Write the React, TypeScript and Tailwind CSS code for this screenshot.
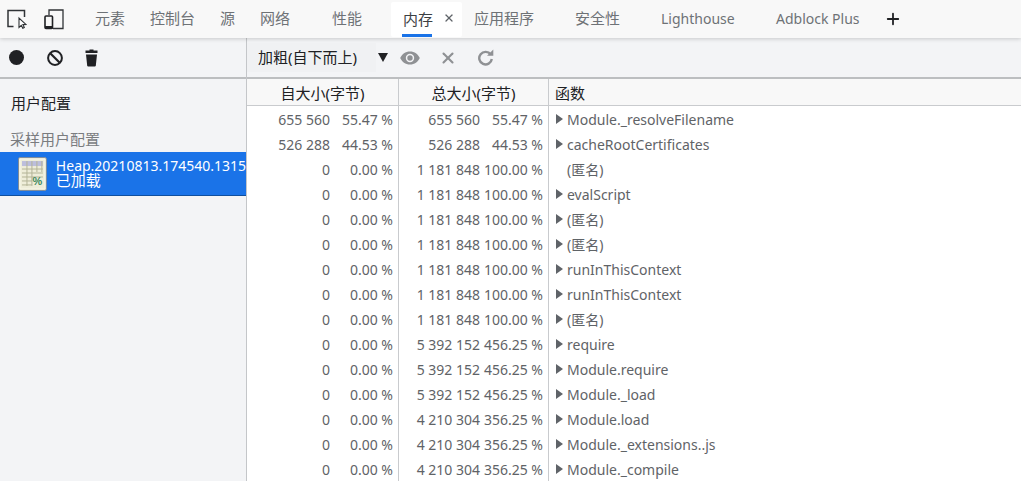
import React from 'react';
import { Plus, X } from 'lucide-react';

const font = "font-['Noto_Sans','Noto_Sans_CJK_SC',sans-serif]";

type Row = { self: string; selfPct: string; total: string; totalPct: string; name: string; arrow: boolean };

const mk = (self: string, selfPct: string, total: string, totalPct: string, name: string, arrow = true): Row => ({
  self,
  selfPct,
  total,
  totalPct,
  name,
  arrow,
});

const rows: Row[] = [
  mk('655 560', '55.47 %', '655 560', '55.47 %', 'Module._resolveFilename'),
  mk('526 288', '44.53 %', '526 288', '44.53 %', 'cacheRootCertificates'),
  mk('0', '0.00 %', '1 181 848', '100.00 %', '(匿名)', false),
  mk('0', '0.00 %', '1 181 848', '100.00 %', 'evalScript'),
  mk('0', '0.00 %', '1 181 848', '100.00 %', '(匿名)'),
  mk('0', '0.00 %', '1 181 848', '100.00 %', '(匿名)'),
  mk('0', '0.00 %', '1 181 848', '100.00 %', 'runInThisContext'),
  mk('0', '0.00 %', '1 181 848', '100.00 %', 'runInThisContext'),
  mk('0', '0.00 %', '1 181 848', '100.00 %', '(匿名)'),
  mk('0', '0.00 %', '5 392 152', '456.25 %', 'require'),
  mk('0', '0.00 %', '5 392 152', '456.25 %', 'Module.require'),
  mk('0', '0.00 %', '5 392 152', '456.25 %', 'Module._load'),
  mk('0', '0.00 %', '4 210 304', '356.25 %', 'Module.load'),
  mk('0', '0.00 %', '4 210 304', '356.25 %', 'Module._extensions..js'),
  mk('0', '0.00 %', '4 210 304', '356.25 %', 'Module._compile'),
];

const tabs = [
  { label: '元素', w: 'w-[55px]', cls: 'text-[15px]' },
  { label: '控制台', w: 'w-[70px]', cls: 'text-[15px]' },
  { label: '源', w: 'w-[40px]', cls: 'text-[15px]' },
  { label: '网络', w: 'w-[72px]', cls: 'text-[15px]' },
  { label: '性能', w: 'w-[59px]', cls: 'text-[15px]' },
];

const tabsAfter = [
  { label: '应用程序', w: 'w-[101px]', cls: 'text-[15px]' },
  { label: '安全性', w: 'w-[86px]', cls: 'text-[15px]' },
  { label: 'Lighthouse', w: 'w-[115px]', cls: 'text-[14px]' },
  { label: 'Adblock Plus', w: 'w-[109px]', cls: 'text-[14px]' },
];

const InspectIcon = () => (
  <svg width="20" height="20" viewBox="0 0 20 20" fill="none">
    <path d="M6.500 17.500H1V1.500h16.500V8" stroke="#303336" strokeWidth="1.500" />
    <path d="M12 9l0 9.500 2.300-2.200 1.500 3 1.500-.8-1.400-2.900 3-.2z" fill="#fff" stroke="#303336" strokeWidth="1.100" />
  </svg>
);

const DeviceIcon = () => (
  <svg width="20" height="21" viewBox="0 0 20 21" fill="none">
    <path d="M5 6V1h14v18.500H9" stroke="#303336" strokeWidth="1.300" />
    <rect x="1" y="7" width="7.500" height="12.500" rx="1" stroke="#202124" strokeWidth="1.600" />
    <rect x="1" y="17" width="7.500" height="3" fill="#202124" />
  </svg>
);

const ClearIcon = () => (
  <svg width="16" height="16" viewBox="0 0 16 16" fill="none">
    <circle cx="8" cy="8" r="6.900" stroke="#202124" strokeWidth="2" />
    <path d="M3.500 3.500l9 9" stroke="#202124" strokeWidth="2.200" />
  </svg>
);

const TrashIcon = () => (
  <svg width="13" height="18" viewBox="0 0 13 18">
    <path d="M4.500 0.500h4v1h4v2.500H.5V1.500h4z" fill="#202124" />
    <path d="M1 5.500h11l-1.200 11.200a1 1 0 0 1-1 .8H3.200a1 1 0 0 1-1-.8z" fill="#202124" />
  </svg>
);

const EyeIcon = () => (
  <svg width="20" height="14" viewBox="0 0 20 14">
    <path
      fillRule="evenodd"
      d="M10 0.500C5.500 0.500 1.800 3.200 0.200 7c1.600 3.800 5.300 6.500 9.800 6.500s8.200-2.700 9.800-6.500C18.200 3.200 14.500.5 10 .5zM10 11.200A4.200 4.200 0 1 1 10 2.800a4.200 4.200 0 0 1 0 8.400zM10 4.300a2.700 2.700 0 1 0 0 5.400 2.700 2.700 0 0 0 0-5.400z"
      fill="#8f9194"
    />
  </svg>
);

const ReloadIcon = () => (
  <svg width="17" height="17" viewBox="0 0 17 17" fill="none">
    <path d="M13.700 5.500A6.300 6.300 0 1 0 14.800 10" stroke="#8f9194" strokeWidth="2.400" />
    <path d="M10 6.800h6.300V.5z" fill="#8f9194" />
  </svg>
);

const SheetIcon = () => (
  <svg width="29" height="34" viewBox="0 0 29 34">
    <rect x="0.500" y="0.500" width="28" height="33" rx="1.500" fill="#ecebd6" stroke="#7f8a96" />
    <rect x="2" y="2" width="25" height="30" fill="#eeedd9" stroke="#f7f6e8" />
    <rect x="4" y="4" width="21" height="5" fill="#bcbedc" />
    <path d="M4 12h21M4 16h21M4 20h21M4 24h10M4 28h10" stroke="#b3b396" strokeWidth="1" />
    <path d="M9 4v25M14 4v25M19 4v11M24 4v11" stroke="#b3b396" strokeWidth="1" />
    <text x="14.500" y="28.500" fontSize="11" fontWeight="700" fill="#3f8a5d" fontFamily="Liberation Sans">%</text>
  </svg>
);

const Arrow = () => (
  <span className="inline-block w-0 h-0 border-y-[5px] border-y-transparent border-l-[7px] border-l-[#5f6368] mr-[4px]" />
);

export default function App() {
  return (
    <div className={`w-[1021px] h-[481px] overflow-hidden bg-white flex flex-col text-[14px] text-[#303942] ${font}`}>
      <div className="h-[38px] shrink-0 bg-[#f8f8f8] flex items-center shadow-[0_1px_4px_rgba(0,0,0,0.18)] relative z-10">
        <div className="w-[95px] shrink-0 flex items-center pl-[7px] gap-[17px]">
          <InspectIcon />
          <DeviceIcon />
        </div>
        {tabs.map((t) => (
          <div key={t.label} className={`${t.w} ${t.cls} shrink-0 text-[#6e7276] mb-[1px]`}>
            {t.label}
          </div>
        ))}
        <div className="w-[71px] h-[35px] shrink-0 bg-white rounded-[2px] flex items-center pl-[12px] relative text-[#3c4043] text-[15px]">
          内存
          <X size={12} strokeWidth={2.6} className="ml-[10px] mb-[2px] text-[#5f6368]" />
          <div className="absolute left-[11px] bottom-0 w-[30px] h-[3px] bg-[#1a73e8]" />
        </div>
        <div className="w-[12px] shrink-0" />
        {tabsAfter.map((t) => (
          <div key={t.label} className={`${t.w} ${t.cls} shrink-0 whitespace-nowrap text-[#6e7276] mb-[1px]`}>
            {t.label}
          </div>
        ))}
        <Plus size={18} strokeWidth={2.4} className="text-[#202124] -ml-[1px] mb-[1px]" />
      </div>

      <div className="flex-1 flex min-h-0">
        <div className="w-[247px] shrink-0 flex flex-col bg-[#f3f4f6] border-r border-[#c4c6c9]">
          <div className="h-[41px] shrink-0 flex items-center pl-[9px] border-b-2 border-[#bcbec0]">
            <div className="w-[15px] h-[15px] rounded-full bg-[#202124]" />
            <div className="ml-[23px]"><ClearIcon /></div>
            <div className="ml-[22px]"><TrashIcon /></div>
          </div>
          <div className="pl-[11px] pt-[13px] text-[#202124] leading-[22px] text-[15px]">用户配置</div>
          <div className="pl-[10px] pt-[15px] text-[#7a7c7f] leading-[20px] text-[15px]">采样用户配置</div>
          <div className="h-[44px] mt-[3px] bg-[#1a73e8] border-b border-[#0f4f9e] flex items-center pl-[18px] gap-[9px] text-white overflow-hidden">
            <SheetIcon />
            <div className="whitespace-nowrap -mt-[1px]">
              <div className="leading-[14px]">Heap.20210813.174540.1315</div>
              <div className="text-[15px] leading-[15px]">已加载</div>
            </div>
          </div>
        </div>

        <div className="flex-1 min-w-0 flex flex-col">
          <div className="h-[41px] shrink-0 bg-[#f3f4f6] border-b-2 border-[#bcbec0] flex items-center">
            <div className="w-[129px] h-[29px] bg-[#f0f1f3] flex items-center pl-[11px] text-[#202124] text-[15px]">加粗(自下而上)</div>
            <div className="w-0 h-0 border-x-[5px] border-x-transparent border-t-[9px] border-t-[#202124] ml-[2px]" />
            <div className="ml-[12px]"><EyeIcon /></div>
            <X size={18} strokeWidth={2.8} className="ml-[19px] text-[#8f9194]" />
            <div className="ml-[20px]"><ReloadIcon /></div>
          </div>

          <div className="h-[27px] shrink-0 bg-[#f8f8f8] border-b border-[#c9cbce] flex items-center text-[#202124] text-[15px]">
            <div className="w-[152px] h-full border-r border-[#c9cbce] flex items-center justify-center pt-[2px]">自大小(字节)</div>
            <div className="w-[150px] h-full border-r border-[#c9cbce] flex items-center justify-center pt-[2px]">总大小(字节)</div>
            <div className="pl-[6px] pt-[2px]">函数</div>
          </div>

          <div className="flex-1 min-h-0 overflow-hidden">
            {rows.map((r, i) => (
              <div key={i} className="h-[25px] flex items-center text-[#5f6367]">
                <div className="w-[152px] h-full shrink-0 border-r border-[#c9cbce] flex items-center justify-end pr-[5px] pt-[1px]">
                  <span>{r.self}</span>
                  <span className="w-[63px] text-right">{r.selfPct}</span>
                </div>
                <div className="w-[150px] h-full shrink-0 border-r border-[#c9cbce] flex items-center justify-end pr-[5px] pt-[1px]">
                  <span>{r.total}</span>
                  <span className="w-[63px] text-right">{r.totalPct}</span>
                </div>
                <div className="pl-[7px] pt-[1px] flex items-center whitespace-nowrap">
                  {r.arrow ? <Arrow /> : <span className="w-[11px]" />}
                  <span>{r.name}</span>
                </div>
              </div>
            ))}
          </div>
        </div>
      </div>
    </div>
  );
}
